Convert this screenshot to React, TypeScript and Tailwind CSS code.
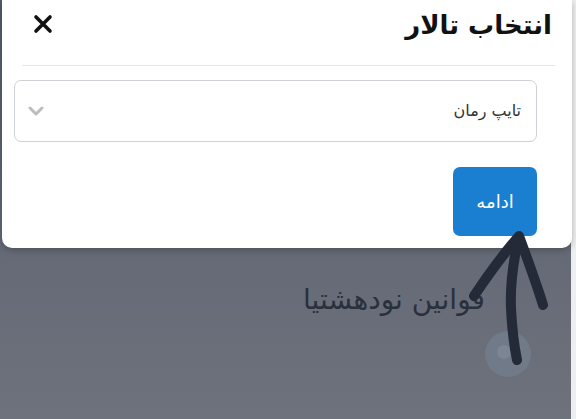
import React from "react";

export default function App() {
  const font = { fontFamily: '"DejaVu Sans", "Noto Sans", sans-serif' };
  return (
    <div className="relative w-[576px] h-[419px] overflow-hidden bg-[#e9eaec]" style={font}>
      {/* page behind overlay */}
      <div className="flex h-full">
        <div className="w-[571px] h-full bg-gradient-to-b from-[#555b68] via-[#636875] to-[#6d727c] flex flex-col items-end pr-[39px] pt-[280px]">
          <div dir="rtl" className="mr-[47px] text-[28px] leading-[40px] text-[#2a303c]">قوانین نودهشتیا</div>
          <div className="mt-[11px] mr-[1px] w-[46px] h-[46px] rounded-full bg-[#707a89] flex items-center justify-center">
            <div className="w-[14px] h-[14px] rounded-full bg-[#7c8594] mr-[8px] mb-[4px]" />
          </div>
        </div>
        <div className="flex-1 bg-[#eceef0]" />
      </div>

      {/* modal */}
      <div className="absolute left-[2px] top-0 w-[570px] h-[248px] bg-white rounded-b-[10px] shadow-[0_2px_6px_rgba(0,0,0,0.25)]" dir="rtl">
        <div className="mx-[17px] ml-[20px] h-[66px] flex items-center justify-between border-b border-[#e6e6e6] pr-[3px]">
          <div className="text-[26px] font-bold text-[#111] leading-none mt-[-16px]">انتخاب تالار</div>
          <svg width="20" height="20" viewBox="0 0 20 20" className="mt-[-17px] ml-[11px]">
            <path d="M3 3 L17 17 M17 3 L3 17" stroke="#111" strokeWidth="3.6" strokeLinecap="round" />
          </svg>
        </div>
        <div className="pr-[35px] pl-[12px] pt-[14px]">
          <div className="h-[62px] border border-[#cfd2d6] rounded-[7px] flex items-center justify-between pr-[15px] pl-[12px]">
            <span className="text-[16px] text-[#333]">تایپ رمان</span>
            <svg width="18" height="12" viewBox="0 0 18 12">
              <path d="M3 3 L9 9 L15 3" stroke="#bdbdbd" strokeWidth="3" fill="none" strokeLinecap="round" strokeLinejoin="round" />
            </svg>
          </div>
          <div className="mt-[25px] flex">
            <button className="w-[84px] h-[69px] rounded-[7px] bg-[#1a7fd1] text-white text-[18px] flex items-center justify-center">
              ادامه
            </button>
          </div>
        </div>
      </div>

      {/* hand-drawn arrow annotation */}
      <svg className="absolute left-0 top-0" width="576" height="419" viewBox="0 0 576 419">
        <path
          d="M474 296 C490 272 505 252 519 236 C527 258 536 282 543 305 M519 236 C513 262 510 285 511 308 C512 330 514 345 517 360"
          stroke="#242a37"
          strokeWidth="10"
          fill="none"
          strokeLinecap="round"
          strokeLinejoin="round"
        />
      </svg>
    </div>
  );
}
